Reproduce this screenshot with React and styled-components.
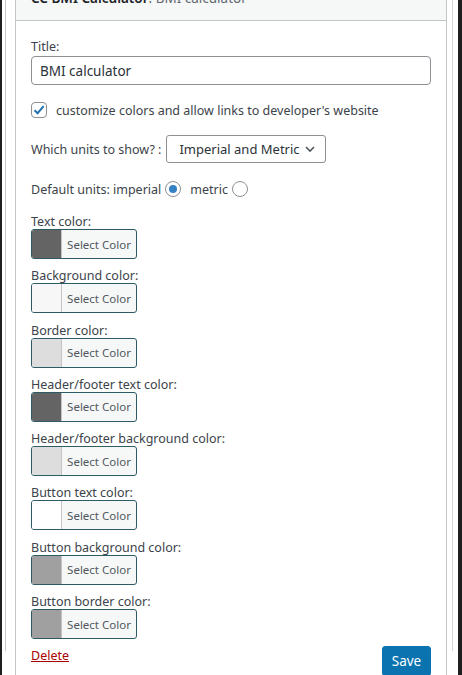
import React from "react";
import styled, { createGlobalStyle } from "styled-components";

const Global = createGlobalStyle`
  html, body { margin: 0; padding: 0; background: #fff; }
  body {
    font-family: "Segoe UI", "Noto Sans", "Open Sans", sans-serif;
    color: #3c434a;
    font-size: 12.5px;
    overflow: hidden;
  }
  * { box-sizing: border-box; }
`;

const Frame = styled.div`
  width: 462px;
  height: 675px;
  border-left: 2px solid #1f1f1f;
  border-right: 4px solid #1f1f1f;
  padding: 0 5px 0 3px;
  overflow: hidden;
`;

const Column = styled.div`
  height: 100%;
  border-left: 1px solid #c9c9c9;
  border-right: 1px solid #d6d6d6;
  padding: 0 5px 0 9px;
`;

const Panel = styled.div`
  width: 432px;
  border: 1px solid #c3c4c7;
  margin-top: -24px;
  background: #fff;
  min-height: 720px;
`;

const Header = styled.div`
  background: #f6f7f7;
  border-bottom: 1px solid #c3c4c7;
  padding: 11px 15px 12px;
  line-height: 20px;
  font-size: 13.5px;
  color: #1d2327;
`;

const HeaderStrong = styled.span`
  font-weight: 600;
`;

const HeaderLight = styled.span`
  color: #646970;
`;

const Body = styled.div`
  padding: 17px 15px 0;
  display: flex;
  flex-direction: column;
`;

const Label = styled.div`
  line-height: ${(p) => p.$lh || 18}px;
  color: #3c434a;
`;

const TextInput = styled.div`
  height: 29px;
  border: 1px solid #8c8f94;
  border-radius: 4px;
  padding: 0 8px;
  display: flex;
  align-items: center;
  font-size: 13.5px;
  color: #2c3338;
`;

const Row = styled.div`
  display: flex;
  align-items: center;
  margin-top: ${(p) => p.$mt || 0}px;
  min-height: 18px;
  white-space: nowrap;
`;

const CheckBox = styled.span`
  width: 16px;
  height: 16px;
  border: 1px solid #8c8f94;
  border-radius: 4px;
  display: inline-flex;
  align-items: center;
  justify-content: center;
  margin-right: 9px;
  background: #fff;
`;

const SelectBox = styled.div`
  width: 160px;
  height: 28px;
  border: 1px solid #8c8f94;
  border-radius: 3px;
  display: flex;
  align-items: center;
  justify-content: space-between;
  padding: 0 9px 0 12px;
  margin-left: 5px;
  font-size: 13px;
  color: #2c3338;
  white-space: nowrap;
`;

const Radio = styled.span`
  width: 16px;
  height: 16px;
  border: 1px solid #8c8f94;
  border-radius: 50%;
  display: inline-flex;
  align-items: center;
  justify-content: center;
  margin: 0 ${(p) => (p.$last ? 0 : 9)}px 0 4px;
  &::after {
    content: "";
    width: 8px;
    height: 8px;
    border-radius: 50%;
    background: ${(p) => (p.$on ? "#3582c4" : "transparent")};
  }
`;

const ColorGroup = styled.div`
  display: flex;
  flex-direction: column;
  margin-top: ${(p) => p.$mt}px;
`;

const ColorButton = styled.div`
  width: 106px;
  height: 30px;
  border: 1px solid #2e5c66;
  border-radius: 3px;
  display: flex;
  overflow: hidden;
  background: #f6f7f7;
`;

const Swatch = styled.span`
  width: 30px;
  background: ${(p) => p.$color};
  border-right: 1px solid #c3c4c7;
`;

const ColorText = styled.span`
  flex: 1;
  display: flex;
  align-items: center;
  justify-content: center;
  font-size: 11.5px;
  color: #50575e;
`;

const Footer = styled.div`
  display: flex;
  justify-content: space-between;
  align-items: flex-start;
  margin-top: 7px;
`;

const DeleteLink = styled.a`
  color: #a00;
  text-decoration: underline;
  line-height: 18px;
  margin-top: 1px;
`;

const SaveButton = styled.button`
  background: #0a73b0;
  border: 1px solid #0a73b0;
  color: #fff;
  border-radius: 3px;
  height: 30px;
  width: 49px;
  padding: 0;
  font-family: inherit;
  font-size: 13.5px;
`;

const colors = [
  ["Text color:", "#646464"],
  ["Background color:", "#f7f7f7"],
  ["Border color:", "#dddddd"],
  ["Header/footer text color:", "#646464"],
  ["Header/footer background color:", "#dddddd"],
  ["Button text color:", "#ffffff"],
  ["Button background color:", "#a0a0a0"],
  ["Button border color:", "#a0a0a0"],
];

export default function App() {
  return (
    <>
      <Global />
      <Frame>
        <Column>
          <Panel>
            <Header>
              <HeaderStrong>CC BMI Calculator</HeaderStrong>
              <HeaderLight>: BMI calculator</HeaderLight>
            </Header>
            <Body>
              <Label>Title:</Label>
              <TextInput>BMI calculator</TextInput>
              <Row $mt={16}>
                <CheckBox>
                  <svg width="14" height="14" viewBox="0 0 14 14">
                    <path d="M2.5 7.2 L5.6 10.2 L11.6 3.2" fill="none" stroke="#2271b1" strokeWidth="2" />
                  </svg>
                </CheckBox>
                <span>customize colors and allow links to developer's website</span>
              </Row>
              <Row $mt={16}>
                <span>Which units to show? :</span>
                <SelectBox>
                  <span>Imperial and Metric</span>
                  <svg width="12" height="12" viewBox="0 0 12 12">
                    <path d="M2 4 L6 8 L10 4" fill="none" stroke="#50575e" strokeWidth="1.6" />
                  </svg>
                </SelectBox>
              </Row>
              <Row $mt={17}>
                <span>Default units: imperial</span>
                <Radio $on />
                <span>metric</span>
                <Radio $last />
              </Row>
              {colors.map(([label, c], i) => (
                <ColorGroup key={label} $mt={i === 0 ? 16 : 9.3}>
                  <Label $lh={15}>{label}</Label>
                  <ColorButton>
                    <Swatch $color={c} />
                    <ColorText>Select Color</ColorText>
                  </ColorButton>
                </ColorGroup>
              ))}
              <Footer>
                <DeleteLink href="#">Delete</DeleteLink>
                <SaveButton>Save</SaveButton>
              </Footer>
            </Body>
          </Panel>
        </Column>
      </Frame>
    </>
  );
}
